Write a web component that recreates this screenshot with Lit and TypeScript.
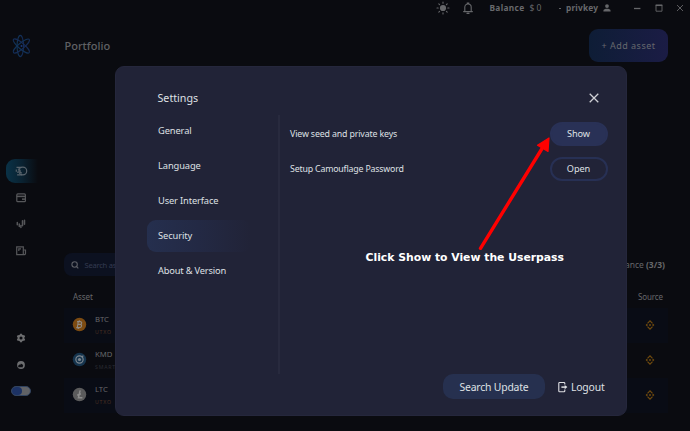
import { LitElement, html, css, svg } from "lit";
import { customElement, property } from "lit/decorators.js";

const glyphs: Record<string, unknown> = {
  sun: svg`<circle cx="7" cy="7" r="3.1" fill="currentColor"/><path d="M7 1v1.2M7 11.8V13M1 7h1.2M11.8 7H13M2.8 2.8l.8.8M10.4 10.4l.8.8M2.8 11.2l.8-.8M10.4 3.6l.8-.8" stroke="currentColor" stroke-width="1.1" stroke-linecap="round"/>`,
  bell: svg`<path d="M2.6 10.6h8.8M3.8 10.4V6.2a3.2 3.2 0 0 1 6.4 0v4.2M6.3 2.6V2h1.4v.6M6 12.4h2" fill="none" stroke="currentColor" stroke-width="1.1" stroke-linecap="round"/>`,
  person: svg`<circle cx="7" cy="5.1" r="1.9" fill="currentColor"/><path d="M3.4 10.6V9.8C3.4 8.4 5.4 7.8 7 7.8s3.6.6 3.6 2v.8z" fill="currentColor"/>`,
  min: svg`<path d="M4 7.5h6.4" stroke="currentColor" stroke-width="1.3"/>`,
  max: svg`<path d="M4 4.3h6v5.9H4z" fill="none" stroke="currentColor" stroke-width=".9"/><path d="M3.6 4.3h6.8" stroke="currentColor" stroke-width="1.5"/>`,
  close: svg`<path d="M4 4l6 6M10 4l-6 6" stroke="currentColor" stroke-width=".9"/>`,
  coins: svg`<circle cx="8.8" cy="7" r="3.9" fill="none" stroke="currentColor" stroke-width="1.2"/><path d="M2.5 3.4h5M3.9 5.200h1.800M2.300 5.400v2.400M3.900 7.600v1.400M3.100 10.900h5M6 5.600c-.5 2 .3 3.200 1.800 3.600" fill="none" stroke="currentColor" stroke-width="1.2"/>`,
  wallet: svg`<rect x="2.8" y="2.9" width="8.6" height="7.8" rx="1" fill="none" stroke="currentColor" stroke-width="1.2"/><path d="M2.6 5.4h8.8" stroke="currentColor" stroke-width="1.5"/><path d="M8 7.4h3v1.5H8z" fill="currentColor"/>`,
  bars: svg`<path d="M3.3 5.4v2.4M5.3 7v2.600M6.900 8.600v2M8.500 3.800v5M10.500 3.200v4" stroke="currentColor" stroke-width="1.5" stroke-linecap="round"/>`,
  news: svg`<path d="M2.7 2.8h6.600v7.800H2.700zM9.300 6h2.200v3.600a1 1 0 0 1-1 1H8.500" fill="none" stroke="currentColor" stroke-width="1.2"/><path d="M4.200 4.300h2.800v1.200H5.400v1.500H4.200z" fill="currentColor"/>`,
  gear: svg`<circle cx="7" cy="7" r="2.5" fill="none" stroke="currentColor" stroke-width="1.9"/><path d="M7 2.700v1.500M7 9.800v1.500M3.300 4.850l1.300.75M9.400 8.400l1.300.75M3.300 9.150l1.300-.75M9.400 5.600l1.300-.75" stroke="currentColor" stroke-width="1.9"/>`,
  share: svg`<circle cx="7" cy="7" r="3.9" fill="currentColor"/><path d="M4.200 9.300V8.500c0-1.300 1-1.900 2.600-1.900V5.400l2.500 1.500-.5 1.100v1.300z" fill="#0a0b10"/>`,
  search: svg`<circle cx="6.600" cy="6.500" r="2.7" fill="none" stroke="currentColor" stroke-width="1.1"/><path d="M8.600 8.600l1.700 1.700" stroke="currentColor" stroke-width="1.2"/>`,
  binance: svg`<path d="M4.500 5.400L7 2.900l2.500 2.500M4.500 8.600L7 11.100l2.500-2.500" fill="none" stroke="currentColor" stroke-width="1.2"/><path d="M2.600 7l1.200-1.200L5 7 3.800 8.200zM9 7l1.200-1.200L11.400 7l-1.200 1.200zM5.800 7L7 5.800 8.200 7 7 8.200z" fill="currentColor"/>`,
  logout: svg`<path d="M8.800 4.600V3.300a.8.8 0 0 0-.8-.8H3.600a.8.8 0 0 0-.8.8v7.600a.8.8 0 0 0 .8.8H8a.8.8 0 0 0 .8-.8V9.600" fill="none" stroke="currentColor" stroke-width="1.1"/><path d="M5.400 7.100h4" stroke="currentColor" stroke-width="1.5"/><path d="M8.700 4.900L11.400 7.100 8.700 9.300z" fill="currentColor"/>`,
  atom: svg`<g fill="none" stroke-width=".6" stroke="url(#atomInk)"><ellipse cx="6.600" cy="7" rx="1.900" ry="6.200"/><ellipse cx="7.200" cy="7" rx="1.700" ry="6" transform="rotate(50 7.200 7)"/><ellipse cx="7.200" cy="7" rx="1.700" ry="6" transform="rotate(-50 7.200 7)"/></g><circle cx="7.300" cy="7" r=".6" fill="#1d3a78"/><linearGradient id="atomInk" gradientUnits="userSpaceOnUse" x1="1" y1="0" x2="13" y2="0"><stop stop-color="#0d4258"/><stop offset=".5" stop-color="#122e58"/><stop offset="1" stop-color="#1d2150"/></linearGradient>`,
  btc: svg`<circle cx="7" cy="7" r="6.300" fill="#7c4b12"/><path d="M5.900 4l-1 6.200M4.700 4.300h3c2 0 1.700 2.500-.2 2.600 2.200.1 1.800 3-.4 3H4M5.300 6.900h2.400M6.800 3v1.300M5.800 9.900v1.200" fill="none" stroke="#8f8b86" stroke-width="1"/>`,
  kmd: svg`<circle cx="7" cy="7" r="6.300" fill="#15344d"/><circle cx="7" cy="7" r="3.400" fill="none" stroke="#7d868e" stroke-width="1.1"/><circle cx="7" cy="7" r="1.500" fill="#7d868e"/><path d="M9 5l1.600-1.600" stroke="#7d868e" stroke-width="1.1"/>`,
  ltc: svg`<circle cx="7" cy="7" r="6.300" fill="#5b5b5c"/><path d="M7.600 3.200L6 10h3.700M4.900 7.700l3.400-1.400" fill="none" stroke="#8c8c8c" stroke-width="1.4"/>`,
};

@customElement("ui-glyph")
export class UiGlyph extends LitElement {
  @property() name = "";
  static styles = css`
    :host { display: block; width: 14px; height: 14px; flex: none; }
    .g { display: block; width: 100%; height: 100%; overflow: visible; }
  `;
  render() {
    return html`<svg class="g" viewBox="0 0 14 14">${glyphs[this.name]}</svg>`;
  }
}

@customElement("app-root")
export class AppRoot extends LitElement {
  static styles = css`
    :host {
      display: block; position: relative; width: 690px; height: 431px; overflow: hidden;
      background: #0a0b10; color: #66676a;
      font-family: "Noto Sans", "Open Sans", sans-serif;
    }
    * { box-sizing: border-box; }
    .app { display: grid; grid-template: 17px 1fr / 41px 1fr; height: 100%; white-space: nowrap; }
    .top { grid-column: 1 / 3; display: flex; align-items: center; justify-content: flex-end;
      font-size: 8px; line-height: 16px; height: 16px; padding-right: 3px; }
    .top b { font-weight: 700; font-size: 8.300px; letter-spacing: .35px; color: #68696c; }
    .top .bell { margin-left: 11px; }
    .top .bal { margin-left: 14.500px; width: 35px; }
    .top .amt { margin-left: 5px; width: 29px; font-size: 8.500px; }
    .top .caret { width: 2px; height: 1px; background: #606164; margin-right: 5.500px; }
    .top .key { width: 34px; letter-spacing: .2px; }
    .top .min { margin-left: 16px; }
    .top .max { margin-left: 8px; }
    .top .cls { margin-left: 7px; }
    .side { display: flex; flex-direction: column; align-items: flex-start; padding: 17px 0 0 6px; color: #56575a; }
    .logo { width: 24px; height: 24px; margin: 0 0 101px 3px; }
    .nav { height: 24px; width: 32px; padding: 5px 0 0 7.500px; }
    .nav.on { border-radius: 9px 0 0 9px; background: linear-gradient(90deg, #0a3247, #0a2231 50%, #0a0b10); color: #58636c; }
    .stack { display: flex; flex-direction: column; gap: 12.300px; padding: 8px 0 0 7.500px; height: 141px; }
    .tools { display: flex; flex-direction: column; gap: 12.500px; padding: 7px 0 0 7.500px; color: #6d6e70; }
    .switch { margin: 14px 0 0 4.500px; width: 20.500px; height: 10.500px; border: 1px solid #31435f; border-radius: 6px; background: #606266; }
    .knob { width: 10px; height: 8.500px; border-radius: 5px; background: #1c3264; }
    .main { padding: 12px 22px 0 23px; display: flex; flex-direction: column; min-width: 0; }
    .head { display: flex; justify-content: space-between; height: 33px; }
    .title { font-size: 11px; font-weight: 500; line-height: 33px; padding-left: .5px; color: #606164; }
    .add { width: 79px; height: 33px; border-radius: 9px; line-height: 33px; text-align: center; font-size: 9px; letter-spacing: .48px;
      background: linear-gradient(90deg, #0e1d36, #1b1c45); color: #66686d; }
    .filter { display: flex; justify-content: space-between; align-items: center; margin-top: 191px; height: 23px; font-size: 8.500px; padding-right: 3px; }
    .find { display: flex; align-items: center; width: 180px; height: 23px; padding-left: 4px; gap: 2.500px; border-radius: 8px;
      background: #0c1120; color: #5d5f66; font-size: 7.600px; letter-spacing: -.25px; }
    .find span { color: #343b51; }
    .cols { display: flex; justify-content: space-between; height: 32px; padding: 15px 5px 0 9px; font-size: 8px; line-height: 12px; }
    .cols span { letter-spacing: -.1px; }
    .row { display: flex; align-items: center; height: 35px; padding: 0 11px 2px 8px; }
    .row:nth-child(odd) { background: #090c15; }
    .coin { width: 15px; height: 15px; margin-right: 8px; }
    .who { flex: 1; font-size: 7.700px; line-height: 10px; }
    .kind { font-size: 5.200px; line-height: 7px; margin-top: 5px; letter-spacing: .8px; color: #4a3023; }
    .kind.smart { color: #2a2b33; }
    .src { color: #714b0e; }
    .veil { position: absolute; inset: 0; display: flex; padding: 66px 0 0 114.500px; white-space: nowrap; }
    .modal { width: 512px; height: 350px; border-radius: 9px; background: #212337; border: 1px solid #25273c; color: #dfe0e4;
      display: grid; grid-template: 48px 259px 1fr / 164px 1fr; }
    .bar { grid-column: 1 / 3; display: flex; justify-content: space-between; padding: 21px 21.500px 0 42px; font-size: 10.700px; line-height: 21px; }
    .x { width: 20px; height: 20px; color: #cfd0d5; }
    .tabs { border-right: 2px solid #282a3e; padding-left: 31.500px; font-size: 9.300px; letter-spacing: -.1px; }
    .tab { height: 32px; margin-bottom: 3px; padding-left: 11px; line-height: 32px; border-radius: 9px; }
    .tab:nth-child(3) { letter-spacing: -.13px; }
    .tab:nth-child(5) { letter-spacing: -.18px; }
    .tab.on { width: 104px; background: linear-gradient(90deg, #252f4e, #232944 50%, #212337); }
    .body { padding: 7px 18px 0 10.500px; font-size: 8.800px; letter-spacing: -.14px; }
    .line { display: flex; justify-content: space-between; align-items: center; height: 23px; margin-bottom: 12px; }
    .line + .line { letter-spacing: -.18px; }
    .btn { width: 58px; height: 24px; border-radius: 12px; text-align: center; font-size: 9.200px; line-height: 20px;
      letter-spacing: -.1px; border: 2px solid #273054; }
    .btn.full { background: #293156; border-color: #293156; }
    .foot { grid-column: 1 / 3; display: flex; justify-content: flex-end; padding-right: 21px; font-size: 10.400px; line-height: 26px; }
    .upd { width: 102px; height: 25px; border-radius: 10px; background: #26304f; text-align: center; letter-spacing: -.18px; margin-right: 10.500px; }
    .out { display: flex; align-items: center; height: 26px; gap: 1.500px; letter-spacing: -.18px; }
    .note { position: absolute; left: 365.500px; top: 250px; font: 700 10.820px/16px "DejaVu Sans", sans-serif; color: #fff; white-space: nowrap; }
    .arrow { position: absolute; left: 470px; top: 130px; width: 90px; height: 125px; }
  `;

  private tabs = ["General", "Language", "User Interface", "Security", "About & Version"];
  private coins = [
    ["btc", "BTC", "UTXO", ""],
    ["kmd", "KMD", "SMART CHAIN", "smart"],
    ["ltc", "LTC", "UTXO", ""],
  ];

  render() {
    return html`
      <div class="app">
        <div class="top">
          <ui-glyph name="sun"></ui-glyph><ui-glyph class="bell" name="bell"></ui-glyph>
          <b class="bal">Balance</b><span class="amt">$ 0</span>
          <i class="caret"></i><b class="key">privkey</b><ui-glyph name="person"></ui-glyph>
          <ui-glyph class="min" name="min"></ui-glyph><ui-glyph class="max" name="max"></ui-glyph><ui-glyph class="cls" name="close"></ui-glyph>
        </div>
        <nav class="side">
          <ui-glyph class="logo" name="atom"></ui-glyph>
          <div class="nav on"><ui-glyph name="coins"></ui-glyph></div>
          <div class="stack">
            <ui-glyph name="wallet"></ui-glyph><ui-glyph name="bars"></ui-glyph><ui-glyph name="news"></ui-glyph>
          </div>
          <div class="tools"><ui-glyph name="gear"></ui-glyph><ui-glyph name="share"></ui-glyph></div>
          <div class="switch"><div class="knob"></div></div>
        </nav>
        <main class="main">
          <div class="head"><div class="title">Portfolio</div><div class="add">+ Add asset</div></div>
          <div class="filter">
            <div class="find"><ui-glyph name="search"></ui-glyph><span>Search asset</span></div>
            <div>Balance <b>(3/3)</b></div>
          </div>
          <div class="cols"><span>Asset</span><span>Source</span></div>
          <div>
            ${this.coins.map(([icon, name, kind, cls]) => html`
              <div class="row">
                <ui-glyph class="coin" name=${icon}></ui-glyph>
                <div class="who">${name}<div class="kind ${cls}">${kind}</div></div>
                <ui-glyph class="src" name="binance"></ui-glyph>
              </div>`)}
          </div>
        </main>
      </div>
      <div class="veil">
        <section class="modal">
          <div class="bar"><span>Settings</span><ui-glyph class="x" name="close"></ui-glyph></div>
          <div class="tabs">
            ${this.tabs.map((t) => html`<div class="tab ${t === "Security" ? "on" : ""}">${t}</div>`)}
          </div>
          <div class="body">
            <div class="line"><span>View seed and private keys</span><div class="btn full">Show</div></div>
            <div class="line"><span>Setup Camouflage Password</span><div class="btn">Open</div></div>
          </div>
          <div class="foot">
            <div class="upd">Search Update</div>
            <div class="out"><ui-glyph name="logout"></ui-glyph><span>Logout</span></div>
          </div>
        </section>
      </div>
      <svg class="arrow" viewBox="470 130 90 125">
        <path d="M480.500 248.300L543 147" stroke="#f00" stroke-width="3.400" stroke-linecap="round"/>
        <path d="M549 138L548 151.500L537.500 145.200z" fill="#f00" stroke="#f00" stroke-width="1.200" stroke-linejoin="round"/>
      </svg>
      <div class="note">Click Show to View the Userpass</div>
    `;
  }
}
